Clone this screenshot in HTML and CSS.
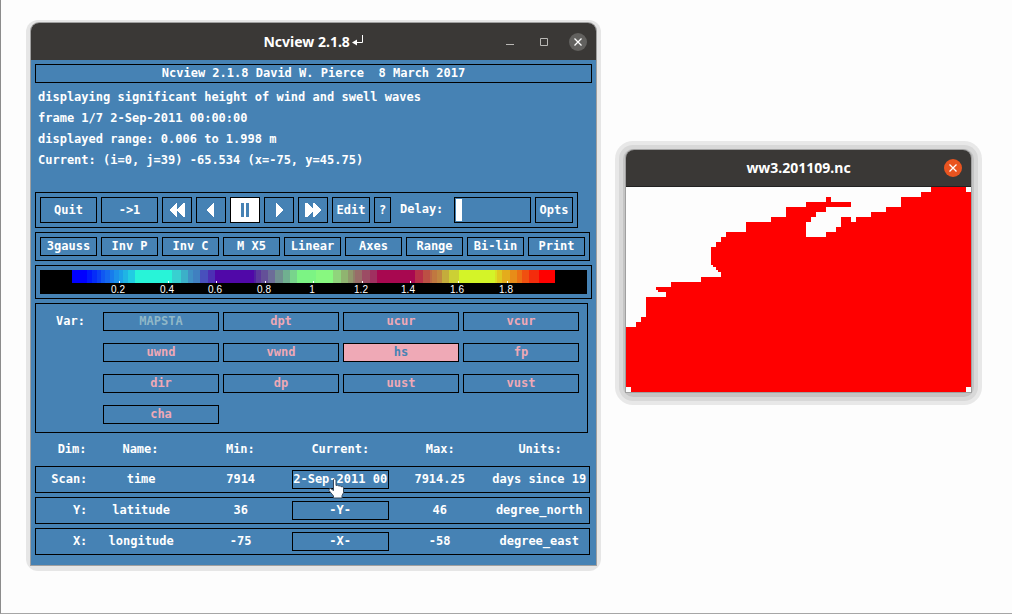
FILE: index.html
```html
<!DOCTYPE html>
<html lang="en">
<head>
<meta charset="utf-8">
<title>Ncview 2.1.8</title>
<link rel="stylesheet" href="styles.css">
</head>
<body>
<main class="desktop">
  <section class="window ncview">
    <header class="titlebar">
      <h1>Ncview 2.1.8 <svg class="return" width="12" height="12" viewBox="0 0 12 12"><path d="M10.500 0v7.500H3" fill="none" stroke="#fff"/><path d="M0 7.500l5-3v6z" fill="#fff"/></svg></h1>
      <div class="window-actions">
        <button class="action" aria-label="Minimize"><svg width="18" height="18" viewBox="0 0 18 18"><path d="M5 11.500h8" stroke="#b9b8b5"/></svg></button>
        <button class="action" aria-label="Maximize"><svg width="18" height="18" viewBox="0 0 18 18"><path d="M5.500 5.500h7v7h-7z" fill="none" stroke="#b9b8b5"/></svg></button>
        <button class="action close-grey" aria-label="Close"><svg width="18" height="18" viewBox="0 0 18 18"><path d="M5.500 5.500l7 7M12.500 5.500l-7 7" stroke="#fff" stroke-width="1.300"/></svg></button>
      </div>
    </header>
    <div class="panel">
      <h2 class="frame banner">Ncview 2.1.8 David W. Pierce&nbsp; 8 March 2017</h2>
      <div class="status">
        <p>displaying significant height of wind and swell waves</p>
        <p>frame 1/7 2-Sep-2011 00:00:00</p>
        <p>displayed range: 0.006 to 1.998 m</p>
        <p>Current: (i=0, j=39) -65.534 (x=-75, y=45.75)</p>
      </div>
      <div class="frame playback">
        <button class="btn wide">Quit</button>
        <button class="btn wide">-&gt;1</button>
        <button class="btn icon" aria-label="Rewind"><svg width="18" height="16" viewBox="0 0 18 16" shape-rendering="crispEdges"><path d="M1 8l7-7h1v6l6-6h2v14h-2l-6-6v6H8z" fill="#fff"/></svg></button>
        <button class="btn icon" aria-label="Back"><svg width="18" height="16" viewBox="0 0 18 16" shape-rendering="crispEdges"><path d="M5 8l6-7h1v14h-1z" fill="#fff"/></svg></button>
        <button class="btn icon pressed" aria-label="Pause"><svg width="18" height="16" viewBox="0 0 18 16"><path d="M5 1h3v14H5zM10 1h3v14h-3z" fill="#4682b4"/></svg></button>
        <button class="btn icon" aria-label="Forward"><svg width="18" height="16" viewBox="0 0 18 16" shape-rendering="crispEdges"><path d="M13 8l-6-7H6v14h1z" fill="#fff"/></svg></button>
        <button class="btn icon" aria-label="Fast forward"><svg width="18" height="16" viewBox="0 0 18 16" shape-rendering="crispEdges"><path d="M17 8l-7-7H9v6L3 1H1v14h2l6-6v6h1z" fill="#fff"/></svg></button>
        <button class="btn medium">Edit</button>
        <button class="btn small">?</button>
        <label class="delay-label" for="delay">Delay:</label>
        <input class="delay" id="delay" type="range" min="0" max="100" value="0">
        <button class="btn medium">Opts</button>
      </div>
      <div class="frame options">
        <button class="btn">3gauss</button>
        <button class="btn">Inv P</button>
        <button class="btn">Inv C</button>
        <button class="btn">M X5</button>
        <button class="btn">Linear</button>
        <button class="btn">Axes</button>
        <button class="btn">Range</button>
        <button class="btn">Bi-lin</button>
        <button class="btn">Print</button>
      </div>
      <div class="frame colorbar">
        <svg class="scale" viewBox="0 0 547 24" shape-rendering="crispEdges">
          <rect width="547" height="24" fill="#000"/>
          <g id="bands"></g>
          <path d="M79 11h1v2h-1zM128 11h1v2h-1zM176 11h1v2h-1zM225 11h1v2h-1zM273 11h1v2h-1zM322 11h1v2h-1zM370 11h1v2h-1zM418 11h1v2h-1zM467 11h1v2h-1z" fill="#fff"/>
          <g class="ticks">
            <text x="78" y="23">0.2</text><text x="127" y="23">0.4</text><text x="175" y="23">0.6</text><text x="224" y="23">0.8</text><text x="272" y="23">1</text><text x="321" y="23">1.2</text><text x="368" y="23">1.4</text><text x="417" y="23">1.6</text><text x="466" y="23">1.8</text>
          </g>
        </svg>
      </div>
      <div class="frame variables">
        <span class="var-label">Var:</span>
        <div class="var-grid">
          <button class="btn var off">MAPSTA</button><button class="btn var">dpt</button><button class="btn var">ucur</button><button class="btn var">vcur</button>
          <button class="btn var">uwnd</button><button class="btn var">vwnd</button><button class="btn var selected">hs</button><button class="btn var">fp</button>
          <button class="btn var">dir</button><button class="btn var">dp</button><button class="btn var">uust</button><button class="btn var">vust</button>
          <button class="btn var">cha</button>
        </div>
      </div>
      <table class="dims">
        <thead>
          <tr><th>Dim:</th><th>Name:</th><th>Min:</th><th>Current:</th><th>Max:</th><th>Units:</th></tr>
        </thead>
        <tbody>
          <tr class="frame"><th>Scan:</th><td>time</td><td>7914</td><td><button class="btn current">2-Sep-2011 00</button><svg class="pointer" width="17" height="21" viewBox="0 0 17 21"><path d="M5.500 1.500q1.500-1.500 2.500 0v6q2-1 2.500.5 2-.7 2.500.7 2-.6 2.500 1v5l-1.500 3v2.300H5.500v-2L1 12.500q-.5-2 1.500-2l3 2z" fill="#fff" stroke="#33495f"/></svg></td><td>7914.25</td><td>days since 19</td></tr>
          <tr class="frame"><th>Y:</th><td>latitude</td><td>36</td><td><button class="btn current">-Y-</button></td><td>46</td><td>degree_north</td></tr>
          <tr class="frame"><th>X:</th><td>longitude</td><td>-75</td><td><button class="btn current">-X-</button></td><td>-58</td><td>degree_east</td></tr>
        </tbody>
      </table>
    </div>
  </section>

  <section class="window plot">
    <header class="titlebar">
      <h1>ww3.201109.nc</h1>
      <div class="window-actions">
        <button class="action close-orange" aria-label="Close"><svg width="18" height="18" viewBox="0 0 18 18"><path d="M5.500 5.500l7 7M12.500 5.500l-7 7" stroke="#fff" stroke-width="1.300"/></svg></button>
      </div>
    </header>
    <svg class="map" viewBox="0 0 345 205" shape-rendering="crispEdges" role="img" aria-label="Significant wave height">
      <path fill="#f00" d="M0 140H10V135H15V130H20V110H40V105H32V103H30V100H45V95H75V90H95V85H92V83H90V80H87V78H85V60H90V55H95V50H100V45H120V35H145V30H160V20H180V15H200V10H205V15H225V20H200V25H190V30H185V35H180V50H200V45H210V40H215V30H225V35H230V30H245V25H260V20H275V10H295V5H305V0H340V5H345V200H340V205H5V200H0z"/>
    </svg>
  </section>
</main>
<script src="scale.js"></script>
</body>
</html>
```
FILE: styles.css
```css
* {
  box-sizing: border-box;
}

body {
  margin: 0;
  min-height: 100vh;
  background: #fdfdfd;
  border-left: 1px solid #8c8c8c;
  border-bottom: 1px solid #a6a6a6;
}

h1, h2, p {
  margin: 0;
}

.desktop {
  display: grid;
  grid-template-columns: minmax(0, 565fr) minmax(0, 345fr);
  gap: 30px;
  align-items: start;
  padding: 23px 41px 0 30px;
}

.window {
  position: relative;
  border-radius: 8px 8px 0 0;
  box-shadow: 0 0 0 1px #a0a0a0;
}

.window::before {
  content: "";
  position: absolute;
  z-index: -1;
}

.ncview::before {
  inset: -3px -5px -6px;
  border-radius: 12px;
  background: #e6e6e6;
}

.plot {
  margin-top: 127px;
}

.plot::before {
  inset: -1px -3px -5px;
  border-radius: 10px;
  background: #c4c4c4;
  box-shadow: 0 0 0 4px #d8d8d8, 0 0 0 8px #e8e8e8;
}

.titlebar {
  position: relative;
  display: flex;
  align-items: center;
  justify-content: center;
  height: 37px;
  border-radius: 8px 8px 0 0;
  background: #3a3836;
  color: #fff;
}

.plot .titlebar {
  border-bottom: 1px solid #222;
}

.titlebar h1 {
  font: bold 14px/20px "Noto Sans", sans-serif;
}

.return {
  margin-left: -2px;
}

.window-actions {
  position: absolute;
  right: 9px;
  display: flex;
  gap: 16px;
}

.action {
  display: block;
  width: 18px;
  height: 18px;
  padding: 0;
  border: 0;
  border-radius: 50%;
  background: none;
}

.action svg {
  display: block;
}

.close-grey {
  background: #62615f;
}

.close-orange {
  background: #e95420;
}

.panel {
  display: flex;
  flex-direction: column;
  gap: 4px;
  padding: 4px 4px 10px;
  background: #4682b4;
  color: #fff;
  font: bold 12px/17px "DejaVu Sans Mono", monospace;
}

.frame {
  border: 1px solid #000;
}

.banner {
  font: inherit;
  text-align: center;
}

.status {
  padding: 0 3px 17px;
  line-height: 21px;
}

.btn {
  height: 19px;
  padding: 0;
  border: 1px solid #000;
  border-radius: 0;
  background: none;
  color: inherit;
  font: inherit;
  white-space: nowrap;
}

.playback {
  display: flex;
  gap: 4px;
  margin-right: 14px;
  padding: 4px;
}

.playback .btn {
  flex: none;
  height: 26px;
}

.playback .wide {
  width: 57px;
}

.playback .icon {
  display: flex;
  align-items: center;
  justify-content: center;
  width: 30px;
}

.playback .medium {
  width: 38px;
}

.playback .small {
  width: 17px;
}

.playback .pressed {
  background: #fff;
}

.delay-label {
  width: 55px;
  padding-left: 5px;
  line-height: 25px;
}

.delay {
  flex: 1;
  min-width: 0;
  height: 26px;
  margin: 0;
  padding: 1px;
  border: 1px solid #000;
  background: none;
  appearance: none;
}

.delay::-webkit-slider-thumb {
  width: 6px;
  height: 22px;
  background: #fff;
  appearance: none;
}

.options {
  display: flex;
  gap: 4px;
  margin-right: 2px;
  padding: 4px;
}

.options .btn {
  flex: 1 1 0;
  min-width: 0;
}

.colorbar {
  padding: 4px;
}

.scale, .map {
  display: block;
  width: 100%;
}

.ticks {
  fill: #fff;
  font: normal 10px "Liberation Sans", sans-serif;
  text-anchor: middle;
}

.variables {
  display: grid;
  grid-template-columns: 67px 1fr;
  margin-right: 4px;
  padding: 8px 8px 8px 0;
}

.var-label {
  padding-left: 20px;
  line-height: 19px;
}

.var-grid {
  display: grid;
  grid-template-columns: repeat(4, 1fr);
  gap: 12px 4px;
}

.var {
  color: #efa9b6;
}

.off {
  color: #90b8c8;
}

.selected {
  background: #efa9b6;
  color: #4682b4;
}

.dims, .dims thead, .dims tbody {
  display: grid;
  gap: 4px;
}

.dims {
  margin-right: 2px;
}

.dims tr {
  display: grid;
  grid-template-columns: 1fr repeat(5, 18%);
  align-items: center;
  min-height: 27px;
}

.dims thead tr {
  min-height: 25px;
}

.dims th, .dims td {
  padding: 0;
  font-weight: bold;
  text-align: center;
  white-space: nowrap;
}

.dims th:first-child {
  padding-right: 4px;
  text-align: right;
}

.dims td {
  position: relative;
}

.current {
  display: block;
  width: 97px;
  margin: 0 auto;
}

.pointer {
  position: absolute;
  top: 8px;
  left: 38px;
}

.map {
  background: #fdfdfd;
}
```
FILE: scale.js
```js
// Each band is [start, colour]; a band runs to the start of the next one.
const bands = [
  [32, "#0000ff"], [47, "#0018fc"], [52, "#052cf8"], [57, "#0a40f4"], [61, "#1058f2"],
  [65, "#1468f0"], [70, "#187cec"], [74, "#1c90ea"], [79, "#1ca0e8"], [83, "#20b4e4"],
  [88, "#22cce2"], [95, "#28f4d8"], [132, "#38d0d0"], [141, "#3cb0c8"], [148, "#4090c4"],
  [153, "#4080c0"], [160, "#4850bc"], [168, "#4c30b4"], [175, "#5008a8"], [214, "#5020a0"],
  [216, "#5c389c"], [221, "#645098"], [228, "#6c6c98"], [235, "#709090"], [243, "#70b090"],
  [250, "#78d48c"], [257, "#7cf484"], [276, "#88f880"], [293, "#90d47c"], [301, "#90b470"],
  [308, "#90986c"], [313, "#908068"], [315, "#986c68"], [322, "#9c4c64"], [330, "#a03060"],
  [337, "#a80850"], [375, "#b83048"], [383, "#bc5044"], [390, "#bc6844"], [392, "#c07840"],
  [397, "#c08840"], [402, "#c4ac3c"], [409, "#ccd034"], [419, "#d4f428"], [455, "#dce024"],
  [457, "#e0c820"], [462, "#e4ac1c"], [470, "#e88c18"], [477, "#ec7014"], [482, "#f05010"],
  [489, "#f42c0c"], [499, "#ff0000"], [515, null]
];

const group = document.getElementById("bands");
for (let i = 0; i < bands.length - 1; i++) {
  const rect = document.createElementNS("http://www.w3.org/2000/svg", "rect");
  rect.setAttribute("x", bands[i][0]);
  rect.setAttribute("width", bands[i + 1][0] - bands[i][0]);
  rect.setAttribute("height", 13);
  rect.setAttribute("fill", bands[i][1]);
  group.appendChild(rect);
}
```
